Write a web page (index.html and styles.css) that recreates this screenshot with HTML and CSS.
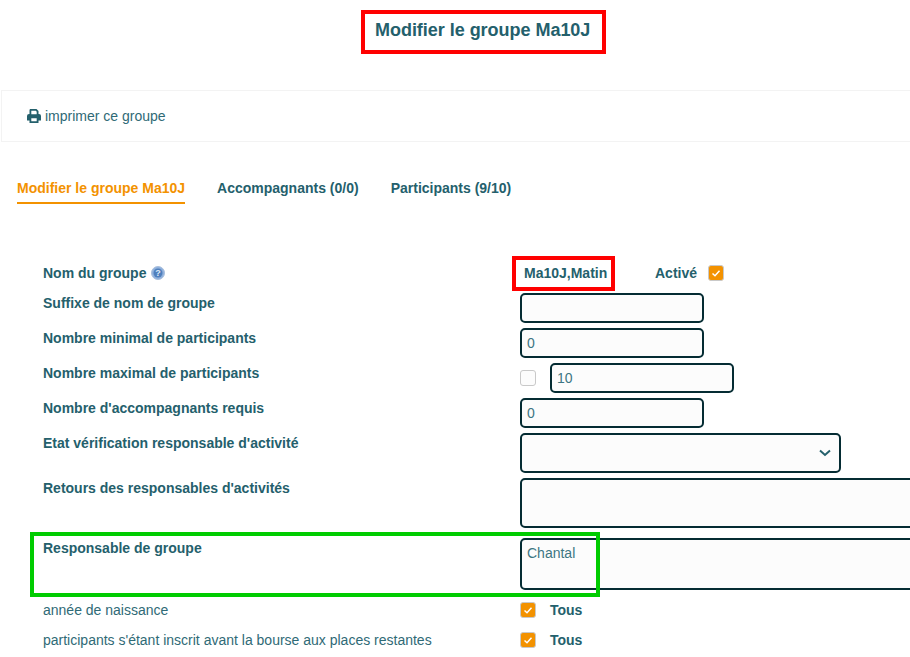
FILE: index.html
```html
<!DOCTYPE html>
<html lang="fr">
<head>
<meta charset="utf-8">
<title>Modifier le groupe Ma10J</title>
<link rel="stylesheet" href="styles.css">
</head>
<body>
<div class="page">
  <header class="head"><h1 class="title">Modifier le groupe Ma10J</h1></header>
  <div class="toolbar">
    <a class="print">
      <svg class="print-icon" viewBox="0 0 14 14" width="14" height="14"><path fill="#24606c" d="M3 0h6.500L11.500 2V5h.5a2 2 0 0 1 2 2V11.500h-2.500V14H2.500v-2.500H0V7a2 2 0 0 1 2-2h.5V1zM4.300 1.800V5.300h5.400V2.700L8.800 1.800zM4.300 9.200v3h5.400v-3z"/></svg>
      imprimer ce groupe
    </a>
  </div>
  <nav class="tabs">
    <a class="tab active">Modifier le groupe Ma10J</a>
    <a class="tab">Accompagnants (0/0)</a>
    <a class="tab">Participants (9/10)</a>
  </nav>
  <form class="form">
    <div class="row first">
      <label class="label">Nom du groupe
        <svg class="help" viewBox="0 0 14 14" width="14" height="14">
          <circle cx="7" cy="7" r="6.500" fill="#8fb0dc" stroke="#a9bfdc"/>
          <circle cx="7" cy="7" r="4.500" fill="#4f7fbd"/>
          <text x="7" y="10" class="help-q" text-anchor="middle">?</text>
        </svg>
      </label>
      <div class="field name-field">
        <span class="group-name">Ma10J,Matin</span>
        <span class="active-label">Activé</span>
        <span class="check on"><svg viewBox="0 0 14 14"><path d="M3.500 7.500l2.500 2.300 4.500-5" /></svg></span>
      </div>
    </div>
    <div class="row"><label class="label">Suffixe de nom de groupe</label><div class="field"><input class="input" type="text"></div></div>
    <div class="row"><label class="label">Nombre minimal de participants</label><div class="field"><input class="input" type="text" value="0"></div></div>
    <div class="row"><label class="label">Nombre maximal de participants</label><div class="field"><span class="check off"></span><input class="input" type="text" value="10"></div></div>
    <div class="row"><label class="label">Nombre d'accompagnants requis</label><div class="field"><input class="input" type="text" value="0"></div></div>
    <div class="row">
      <label class="label">Etat vérification responsable d'activité</label>
      <div class="field"><div class="select"><svg viewBox="0 0 12 8" width="12" height="8"><path d="M1 1.500l5 4.500 5-4.500"/></svg></div></div>
    </div>
    <div class="row"><label class="label">Retours des responsables d'activités</label><div class="field"><div class="area retours"></div></div></div>
    <div class="row resp"><label class="label">Responsable de groupe</label><div class="field"><div class="area chantal">Chantal</div></div></div>
    <div class="row plain"><label class="label light">année de naissance</label><div class="field"><span class="check on"><svg viewBox="0 0 14 14"><path d="M3.500 7.500l2.500 2.300 4.500-5"/></svg></span><span class="tous">Tous</span></div></div>
    <div class="row plain"><label class="label light">participants s'étant inscrit avant la bourse aux places restantes</label><div class="field"><span class="check on"><svg viewBox="0 0 14 14"><path d="M3.500 7.500l2.500 2.300 4.500-5"/></svg></span><span class="tous">Tous</span></div></div>
  </form>
</div>
<div class="mark red title-mark"></div>
<div class="mark red name-mark"></div>
<div class="mark green resp-mark"></div>
</body>
</html>
```
FILE: styles.css
```css
html, body { margin: 0; padding: 0; background: #fff; overflow: hidden; }
body {
  width: 910px; height: 657px; position: relative;
  font-family: "Liberation Sans", Arial, sans-serif;
  font-size: 14px; color: #24606c;
}
.page { width: 910px; }
.head { height: 90px; box-sizing: border-box; padding-top: 20px; }
.title { margin: 0 0 0 375px; font-size: 18px; line-height: 20px; font-weight: 700; color: #24606c; letter-spacing: -0.03px; }
.toolbar {
  margin-left: 1px; height: 52px; box-sizing: border-box;
  border: 1px solid #f3f3f3; border-right: 0;
  display: flex; align-items: center; padding-left: 25px;
}
.print { display: flex; align-items: center; gap: 4px; color: #2f6a76; }
.print-icon { display: block; }
.tabs { display: flex; gap: 32px; margin: 36px 0 0 17px; height: 26px; }
.tab { font-weight: 700; line-height: 20px; height: 24px; color: #24606c; }
.tab.active { color: #f39200; border-bottom: 2px solid #f39200; }
.form { margin-top: 54px; }
.row { display: grid; grid-template-columns: 477px 1fr; padding-left: 43px; margin-bottom: 5px; }
.row.first { height: 30px; }
.label { font-weight: 700; line-height: 20px; display: block; }
.row.first .label { line-height: 30px; display: flex; align-items: center; gap: 5px; }
.help { display: block; }
.help-q { font: 700 9px "Liberation Sans", sans-serif; fill: #dfe9f6; }
.light { font-weight: 400; line-height: 30px; color: #2f6a76; }
.field { display: flex; align-items: center; gap: 14px; min-width: 0; }
.name-field { gap: 0; padding-left: 4px; font-weight: 700; }
.group-name { width: 131px; }
.active-label { width: 53px; }
.input {
  width: 184px; height: 30px; box-sizing: border-box; margin: 0;
  border: 2px solid #052c33; border-radius: 5px; background: #fcfcfc;
  padding: 0 5px; font: 14px "Liberation Sans", sans-serif; color: #3d7683; outline: 0;
}
.check {
  width: 16px; height: 16px; box-sizing: border-box; border-radius: 3px;
  border: 1px solid #c9c9c9; background: #fcfcfc; display: block; flex: none;
}
.check.on { background: #f39200; }
.check svg { display: block; width: 14px; height: 14px; fill: none; stroke: #fff; stroke-width: 1.500; }
.select {
  width: 321px; height: 40px; box-sizing: border-box;
  border: 2px solid #052c33; border-radius: 5px; background: #fcfcfc;
  display: flex; align-items: center; justify-content: flex-end; padding-right: 8px;
}
.select svg { fill: none; stroke: #24606c; stroke-width: 2; }
.area {
  width: 420px; box-sizing: border-box; flex: none;
  border: 2px solid #052c33; border-radius: 5px; background: #fcfcfc;
  padding: 4px 5px; line-height: 18px; color: #3d7683;
}
.retours { height: 50px; }
.row.resp { margin-top: 10px; margin-bottom: 5px; }
.chantal { height: 52px; }
.row.plain { height: 30px; margin-bottom: 0; }
.tous { font-weight: 700; }
.mark { position: absolute; box-sizing: border-box; pointer-events: none; }
.mark.red { border: 4px solid #ff0000; }
.mark.green { border: 4px solid #00cc00; }
.title-mark { left: 361px; top: 10px; width: 245px; height: 44px; }
.name-mark { left: 512px; top: 256px; width: 103px; height: 35px; }
.resp-mark { left: 30px; top: 532px; width: 570px; height: 65px; }
```
